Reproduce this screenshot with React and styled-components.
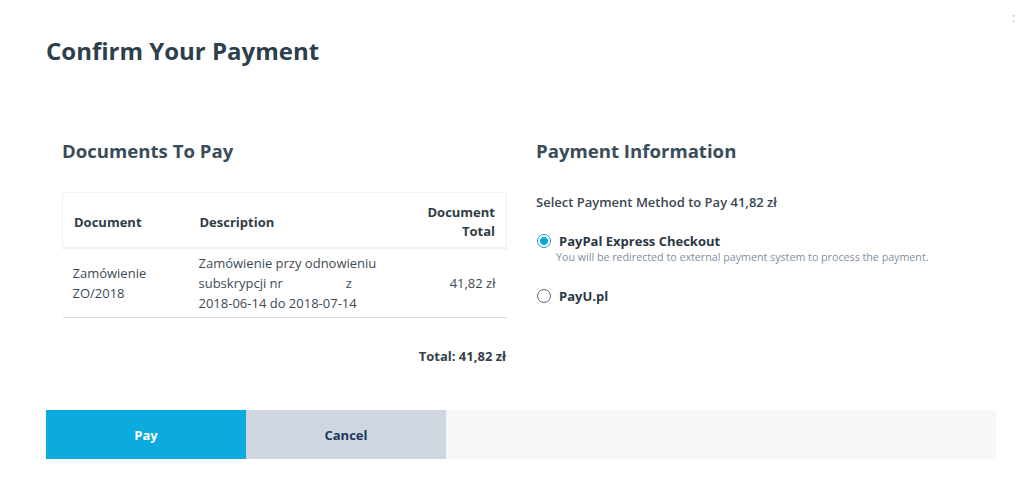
import React from "react";
import styled, { createGlobalStyle } from "styled-components";

const GlobalStyle = createGlobalStyle`
  html, body {
    margin: 0;
    padding: 0;
    background: #ffffff;
    font-family: "Open Sans", "Noto Sans", sans-serif;
    color: #34444f;
  }
  * {
    box-sizing: border-box;
  }
`;

const documents = [
  {
    id: 1,
    number: ["Zamówienie", "ZO/2018"],
    description: "Zamówienie przy odnowieniu",
    period: "2018-06-14 do 2018-07-14",
    total: "41,82 zł",
  },
];

const methods = [
  {
    id: "paypal",
    label: "PayPal Express Checkout",
    note: "You will be redirected to external payment system to process the payment.",
  },
  { id: "payu", label: "PayU.pl" },
];

function App() {
  const selected = "paypal";

  return (
    <Page>
      <GlobalStyle />
      <CloseMark>:</CloseMark>
      <Title>Confirm Your Payment</Title>

      <Columns>
        <Column>
          <SectionTitle>Documents To Pay</SectionTitle>
          <Table>
            <colgroup>
              <col style={{ width: 126 }} />
              <col style={{ width: 212 }} />
              <col style={{ width: 106 }} />
            </colgroup>
            <thead>
              <tr>
                <Th>Document</Th>
                <Th>Description</Th>
                <Th $right>
                  Document
                  <br />
                  Total
                </Th>
              </tr>
            </thead>
            <tbody>
              {documents.map((doc) => (
                <tr key={doc.id}>
                  <Td>
                    {doc.number[0]}
                    <br />
                    {doc.number[1]}
                  </Td>
                  <Td>
                    {doc.description}
                    <br />
                    subskrypcji nr <Redacted /> z
                    <br />
                    {doc.period}
                  </Td>
                  <Td $right>{doc.total}</Td>
                </tr>
              ))}
            </tbody>
          </Table>
          <GrandTotal>Total: 41,82 zł</GrandTotal>
        </Column>

        <Column>
          <SectionTitle>Payment Information</SectionTitle>
          <Prompt>Select Payment Method to Pay 41,82 zł</Prompt>
          <MethodList>
            {methods.map((m) => (
              <Method key={m.id}>
                <MethodRow>
                  <Radio $checked={m.id === selected} />
                  <MethodLabel>{m.label}</MethodLabel>
                </MethodRow>
                {m.note && <MethodNote>{m.note}</MethodNote>}
              </Method>
            ))}
          </MethodList>
        </Column>
      </Columns>

      <Footer>
        <ActionButton $primary>Pay</ActionButton>
        <ActionButton>Cancel</ActionButton>
      </Footer>
    </Page>
  );
}

export default App;

const Page = styled.div`
  position: relative;
  width: 1017px;
  height: 502px;
  overflow: hidden;
  padding: 35px 21px 0 46px;
`;

const CloseMark = styled.span`
  position: absolute;
  top: 9px;
  left: 1012px;
  font-size: 12px;
  color: #b9b0a0;
`;

const Title = styled.h1`
  margin: 0;
  font-size: 24px;
  line-height: 32px;
  font-weight: 700;
  color: #2e3f4c;
`;

const Columns = styled.div`
  display: grid;
  grid-template-columns: 444px 1fr;
  column-gap: 30px;
  padding-left: 16px;
  margin-top: 70px;
`;

const Column = styled.div`
  display: flex;
  flex-direction: column;
`;

const SectionTitle = styled.h2`
  margin: 0;
  font-size: 18.6px;
  line-height: 28px;
  font-weight: 700;
  color: #3a4c59;
`;

const Table = styled.table`
  margin-top: 27px;
  width: 444px;
  table-layout: fixed;
  border-collapse: collapse;
  font-size: 13px;

  thead tr {
    border: 1px solid #eef0f2;
    border-bottom: 2px solid #eceff1;
  }

  tbody tr {
    border-bottom: 1px solid #d6dde1;
  }
`;

const Th = styled.th`
  height: 54px;
  padding: 10px 11px 6px;
  font-weight: 700;
  line-height: 19px;
  color: #2f3d48;
  vertical-align: middle;
  text-align: ${(props) => (props.$right ? "right" : "left")};
`;

const Td = styled.td`
  height: 69px;
  padding: 4px 11px 4px 10px;
  line-height: 20px;
  color: #3d4a55;
  vertical-align: middle;
  text-align: ${(props) => (props.$right ? "right" : "left")};
  white-space: nowrap;
`;

const Redacted = styled.span`
  display: inline-block;
  width: 56px;
`;

const GrandTotal = styled.div`
  margin-top: 28px;
  text-align: right;
  font-size: 13px;
  line-height: 20px;
  font-weight: 700;
  color: #34414c;
`;

const Prompt = styled.div`
  margin-top: 28px;
  font-size: 13px;
  line-height: 18px;
  font-weight: 600;
  color: #3a4853;
`;

const MethodList = styled.div`
  display: flex;
  flex-direction: column;
  gap: 22px;
  margin-top: 21px;
`;

const Method = styled.div`
  display: flex;
  flex-direction: column;
`;

const MethodRow = styled.div`
  display: flex;
  align-items: center;
  gap: 8px;
  padding-left: 1px;
`;

const Radio = styled.span`
  width: 14px;
  height: 14px;
  border-radius: 50%;
  border: 1.5px solid ${(props) => (props.$checked ? "#12a6e0" : "#5f6a73")};
  background: ${(props) =>
    props.$checked
      ? "radial-gradient(circle, #12a6e0 0 3.6px, #ffffff 4.4px)"
      : "#ffffff"};
  flex: none;
`;

const MethodLabel = styled.span`
  font-size: 13px;
  line-height: 18px;
  font-weight: 700;
  color: #2b3944;
`;

const MethodNote = styled.span`
  padding-left: 20px;
  font-size: 10.7px;
  line-height: 15px;
  color: #8190a0;
`;

const Footer = styled.div`
  display: flex;
  margin-top: 44px;
  height: 49px;
  width: 950px;
  background: #f6f7f9;
`;

const ActionButton = styled.button`
  width: 200px;
  height: 49px;
  border: none;
  margin: 0;
  padding: 0;
  font-family: "Open Sans", sans-serif;
  font-size: 13px;
  font-weight: 700;
  color: ${(props) => (props.$primary ? "#ffffff" : "#203a5e")};
  background: ${(props) => (props.$primary ? "#0cabdf" : "#cfd6df")};
  cursor: pointer;
`;
